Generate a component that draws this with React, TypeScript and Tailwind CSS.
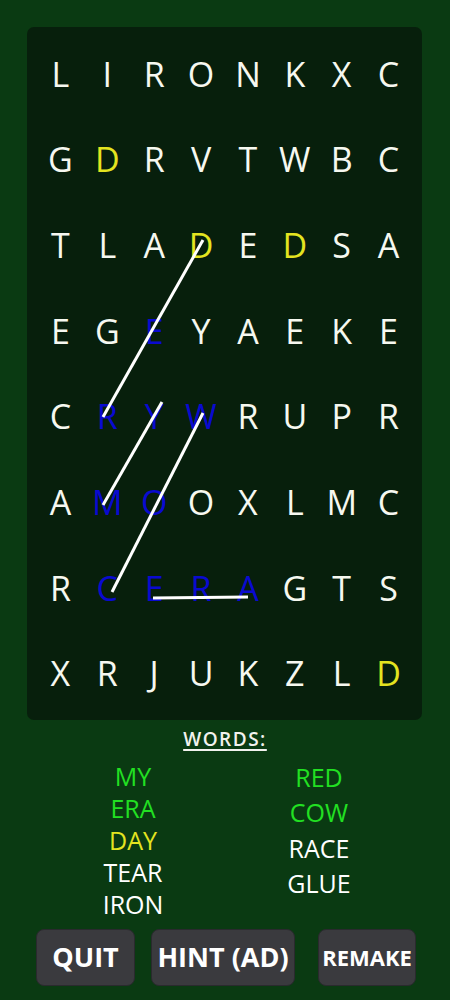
import React from 'react';

const GRID = [
  'LIRONKXC',
  'GDRVTWBC',
  'TLADEDSA',
  'EGEYAEKE',
  'CRYWRUPR',
  'AMOOXLMC',
  'RCERAGTS',
  'XRJUKZLD',
];

// cells found (blue) and hinted (yellow)
const BLUE = ['3-2', '4-1', '4-2', '4-3', '5-1', '5-2', '6-1', '6-2', '6-3', '6-4'];
const YELLOW = ['1-1', '2-3', '2-5', '7-7'];

const LINES = [
  [176, 213, 76, 390],
  [135, 375, 76, 478],
  [176, 386, 85, 565],
  [126, 571, 221, 570],
];

type Word = { text: string; color: string };

const LEFT: Word[] = [
  { text: 'MY', color: 'text-[#22e022]' },
  { text: 'ERA', color: 'text-[#22e022]' },
  { text: 'DAY', color: 'text-[#e4e420]' },
  { text: 'TEAR', color: 'text-white' },
  { text: 'IRON', color: 'text-white' },
];

const RIGHT: Word[] = [
  { text: 'RED', color: 'text-[#22e022]' },
  { text: 'COW', color: 'text-[#22e022]' },
  { text: 'RACE', color: 'text-white' },
  { text: 'GLUE', color: 'text-white' },
];

function Board() {
  return (
    <div className="relative mt-[27px] ml-[27px] w-[395px] h-[693px] rounded-[7px] bg-[#071f0c]">
      <div className="grid grid-cols-8 grid-rows-8 h-full px-[10px] py-[4px]">
        {GRID.map((row, r) =>
          row.split('').map((ch, c) => {
            const key = `${r}-${c}`;
            const color = BLUE.includes(key)
              ? 'text-[#0a0ad0]'
              : YELLOW.includes(key)
              ? 'text-[#e4e420]'
              : 'text-[#f6f8f0]';
            return (
              <div key={key} className={`flex items-center justify-center text-[34px] leading-none ${color}`}>
                {ch}
              </div>
            );
          })
        )}
      </div>
      <svg className="absolute inset-0 pointer-events-none" width="395" height="693">
        {LINES.map(([x1, y1, x2, y2], i) => (
          <line key={i} x1={x1} y1={y1} x2={x2} y2={y2} stroke="#ffffff" strokeWidth="3" />
        ))}
      </svg>
    </div>
  );
}

export default function App() {
  return (
    <div className="w-[450px] h-[1000px] bg-[#0a3a12] overflow-hidden font-['Open_Sans',sans-serif]">
      <Board />

      <div className="mt-[8px] text-center text-[19px] leading-[22px] font-semibold tracking-[1.5px] text-[#f2f2ee] underline underline-offset-[3px] decoration-[1.5px]">
        WORDS:
      </div>

      <div className="flex mt-[10px] ml-[40px]">
        <div className="w-[186px] flex flex-col items-center">
          {LEFT.map((w) => (
            <div key={w.text} className={`text-[25px] leading-[32px] ${w.color}`}>
              {w.text}
            </div>
          ))}
        </div>
        <div className="w-[186px] flex flex-col items-center">
          {RIGHT.map((w) => (
            <div key={w.text} className={`text-[25px] leading-[35.3px] ${w.color}`}>
              {w.text}
            </div>
          ))}
        </div>
      </div>

      <div className="flex mt-[9px]">
        <button className="ml-[36px] w-[99px] h-[57px] rounded-[8px] bg-[#3a3a3e] border border-[#2a2a2e] text-white font-bold text-[27px]">
          QUIT
        </button>
        <button className="ml-[16px] w-[144px] h-[57px] rounded-[8px] bg-[#3a3a3e] border border-[#2a2a2e] text-white font-bold text-[27px] whitespace-nowrap">
          HINT (AD)
        </button>
        <button className="ml-[23px] w-[98px] h-[57px] rounded-[8px] bg-[#3a3a3e] border border-[#2a2a2e] text-white font-bold text-[22px]">
          REMAKE
        </button>
      </div>
    </div>
  );
}
